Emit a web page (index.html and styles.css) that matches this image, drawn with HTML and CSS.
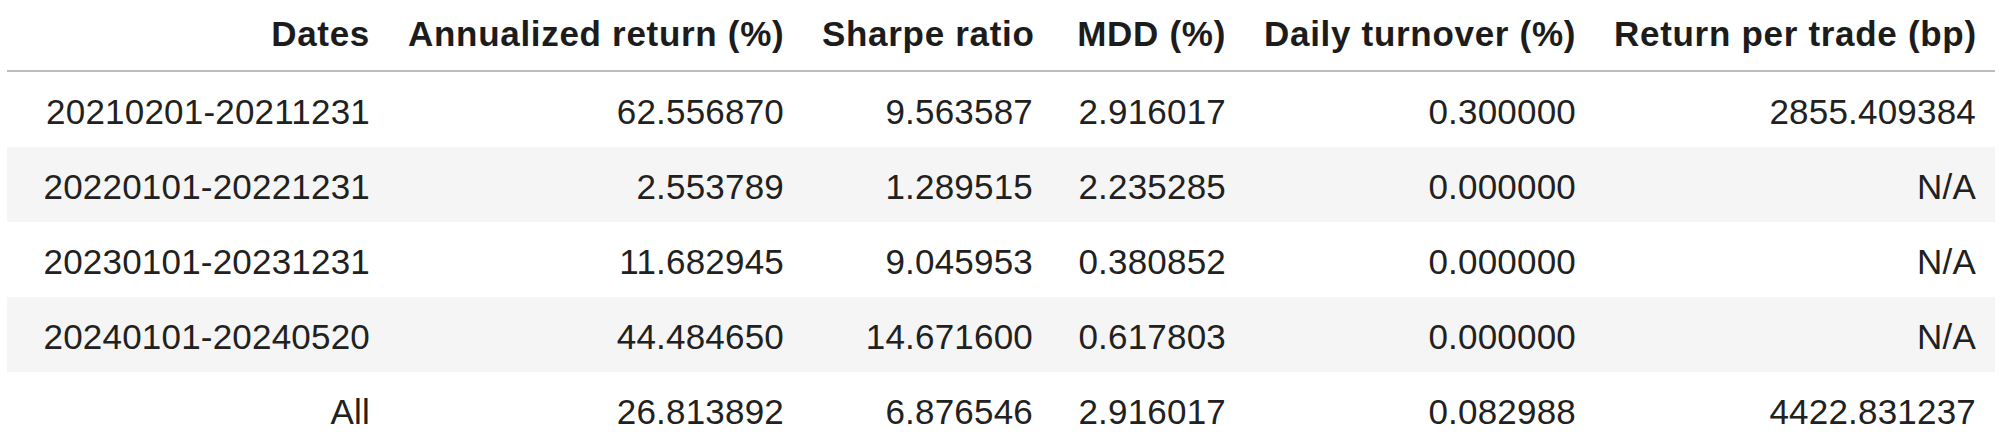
FILE: index.html
```html
<!DOCTYPE html>
<html lang="en">
<head>
<meta charset="utf-8">
<title>Performance summary</title>
<link rel="stylesheet" href="styles.css">
</head>
<body>
<div class="wrap">
<table class="stats">
  <thead>
    <tr>
      <th class="c1">Dates</th>
      <th class="c2">Annualized return (%)</th>
      <th class="c3">Sharpe ratio</th>
      <th class="c4">MDD (%)</th>
      <th class="c5">Daily turnover (%)</th>
      <th class="c6">Return per trade (bp)</th>
    </tr>
  </thead>
  <tbody>
    <tr><td>20210201-20211231</td><td>62.556870</td><td>9.563587</td><td>2.916017</td><td>0.300000</td><td>2855.409384</td></tr>
    <tr><td>20220101-20221231</td><td>2.553789</td><td>1.289515</td><td>2.235285</td><td>0.000000</td><td>N/A</td></tr>
    <tr><td>20230101-20231231</td><td>11.682945</td><td>9.045953</td><td>0.380852</td><td>0.000000</td><td>N/A</td></tr>
    <tr><td>20240101-20240520</td><td>44.484650</td><td>14.671600</td><td>0.617803</td><td>0.000000</td><td>N/A</td></tr>
    <tr><td>All</td><td>26.813892</td><td>6.876546</td><td>2.916017</td><td>0.082988</td><td>4422.831237</td></tr>
  </tbody>
</table>
</div>
</body>
</html>
```

FILE: styles.css
```css
html, body {
  margin: 0;
  padding: 0;
  background: #ffffff;
}

.wrap {
  padding-left: 7px;
}

.stats {
  width: 1988px;
  table-layout: fixed;
  border-collapse: collapse;
  border-spacing: 0;
  font-family: "Liberation Sans", Arial, sans-serif;
  font-size: 35px;
  line-height: 41px;
  color: #212121;
}

.stats th,
.stats td {
  box-sizing: border-box;
  text-align: right;
  white-space: nowrap;
  padding: 19px 19px 15px 19px;
}

.stats td {
  letter-spacing: 0.2px;
}

.stats th {
  font-weight: bold;
  color: #1c1c1c;
  letter-spacing: 0.7px;
  padding-top: 13px;
  padding-bottom: 16px;
  border-bottom: 2px solid #bdbdbd;
}

.stats .c1 { width: 382px; }
.stats .c2 { width: 414px; }
.stats .c3 { width: 249px; }
.stats .c4 { width: 193px; }
.stats .c5 { width: 350px; }
.stats .c6 { width: 400px; }

.stats tbody tr:nth-child(even) {
  background: #f5f5f5;
}
```
